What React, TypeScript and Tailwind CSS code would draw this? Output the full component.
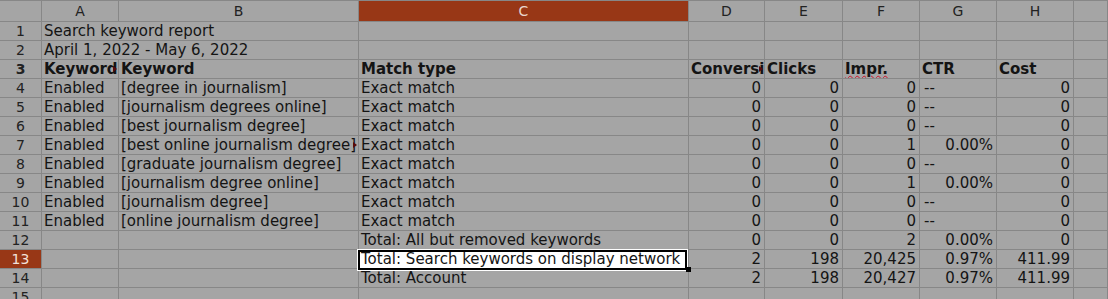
const cols = ["A", "B", "C", "D", "E", "F", "G", "H", ""];

type Row = {
  a?: string;
  b?: string;
  c?: string;
  nums?: [string, string, string, string, string];
};

const rows: Row[] = [
  { a: "Enabled", b: "[degree in journalism]", c: "Exact match", nums: ["0", "0", "0", "--", "0"] },
  { a: "Enabled", b: "[journalism degrees online]", c: "Exact match", nums: ["0", "0", "0", "--", "0"] },
  { a: "Enabled", b: "[best journalism degree]", c: "Exact match", nums: ["0", "0", "0", "--", "0"] },
  { a: "Enabled", b: "[best online journalism degree]", c: "Exact match", nums: ["0", "0", "1", "0.00%", "0"] },
  { a: "Enabled", b: "[graduate journalism degree]", c: "Exact match", nums: ["0", "0", "0", "--", "0"] },
  { a: "Enabled", b: "[journalism degree online]", c: "Exact match", nums: ["0", "0", "1", "0.00%", "0"] },
  { a: "Enabled", b: "[journalism degree]", c: "Exact match", nums: ["0", "0", "0", "--", "0"] },
  { a: "Enabled", b: "[online journalism degree]", c: "Exact match", nums: ["0", "0", "0", "--", "0"] },
  { c: "Total: All but removed keywords", nums: ["0", "0", "2", "0.00%", "0"] },
  { c: "Total: Search keywords on display network", nums: ["2", "198", "20,425", "0.97%", "411.99"] },
  { c: "Total: Account", nums: ["2", "198", "20,427", "0.97%", "411.99"] },
];

const grid =
  "grid grid-cols-[42px_77px_240px_330px_76px_78px_77px_77px_77px_1fr]";
const cell =
  "relative h-[19px] border-r border-b border-[#878787] overflow-hidden whitespace-nowrap px-[2px] leading-[18px]";

// little arrow LibreOffice paints when text is cut off at the cell edge
function Clipped() {
  return (
    <span className="absolute right-[1px] top-[6px] h-0 w-0 border-l-[4px] border-y-[3px] border-l-[#5a0a0a] border-y-transparent" />
  );
}

function RowHead({ n, active }: { n: number; active?: boolean }) {
  return (
    <div
      className={`${cell} text-center text-[14px] ${
        active ? "bg-[#983716] text-[#f2e2da]" : "text-[#222]"
      }`}
    >
      {n}
    </div>
  );
}

function Num({ v }: { v: string }) {
  const isText = v === "--";
  return (
    <div className={`${cell} ${isText ? "text-left pl-[4px]" : "text-right pr-[3px]"}`}>{v}</div>
  );
}

export default function App() {
  return (
    <div
      className="h-[299px] w-[1108px] overflow-hidden bg-[#a5a5a5] text-[15px] text-[#141414]"
      style={{ fontFamily: '"DejaVu Sans", sans-serif' }}
    >
      {/* column letters */}
      <div className={`${grid} border-t border-[#878787]`}>
        <div className={`${cell} h-[21px]`} />
        {cols.map((c) => (
          <div
            key={c || "i"}
            className={`${cell} h-[21px] text-center text-[14px] leading-[20px] ${
              c === "C" ? "bg-[#983716] text-[#e9d6cd]" : "text-[#222]"
            }`}
          >
            {c}
          </div>
        ))}
      </div>

      <div className={grid}>
        <RowHead n={1} />
        <div className={`${cell} col-span-2`}>Search keyword report</div>
        {Array.from({ length: 7 }).map((_, i) => (
          <div key={i} className={cell} />
        ))}
      </div>

      <div className={grid}>
        <RowHead n={2} />
        <div className={`${cell} col-span-2`}>April 1, 2022 - May 6, 2022</div>
        {Array.from({ length: 7 }).map((_, i) => (
          <div key={i} className={cell} />
        ))}
      </div>

      <div className={`${grid} font-bold`}>
        <RowHead n={3} />
        <div className={cell}>
          Keyword Status
          <Clipped />
        </div>
        <div className={cell}>Keyword</div>
        <div className={cell}>Match type</div>
        <div className={cell}>
          Conversions
          <Clipped />
        </div>
        <div className={cell}>Clicks</div>
        <div className={cell}>
          <span className="underline decoration-wavy decoration-[#d0102a] decoration-1 underline-offset-[1px]">
            Impr.
          </span>
        </div>
        <div className={cell}>CTR</div>
        <div className={cell}>Cost</div>
        <div className={cell} />
      </div>

      {rows.map((r, i) => {
        const n = i + 4;
        const selected = n === 13;
        return (
          <div key={n} className={`${grid} ${selected ? "relative z-10" : ""}`}>
            <RowHead n={n} active={selected} />
            <div className={cell}>{r.a}</div>
            <div className={cell}>
              {r.b}
              {n === 7 && <Clipped />}
            </div>
            {selected ? (
              <div className={`${cell} overflow-visible bg-white`}>
                {r.c}
                <span className="absolute -left-px top-0 right-px -bottom-[2px] z-10 border-2 border-black shadow-[0_0_0_1px_#fff]" />
                <span className="absolute -right-[3px] -bottom-[4px] z-10 h-[5px] w-[5px] bg-black" />
              </div>
            ) : (
              <div className={cell}>{r.c}</div>
            )}
            {r.nums?.map((v, j) => (
              <Num key={j} v={v} />
            ))}
            <div className={cell} />
          </div>
        );
      })}

      <div className={grid}>
        <RowHead n={15} />
        {Array.from({ length: 9 }).map((_, i) => (
          <div key={i} className={cell} />
        ))}
      </div>
    </div>
  );
}
